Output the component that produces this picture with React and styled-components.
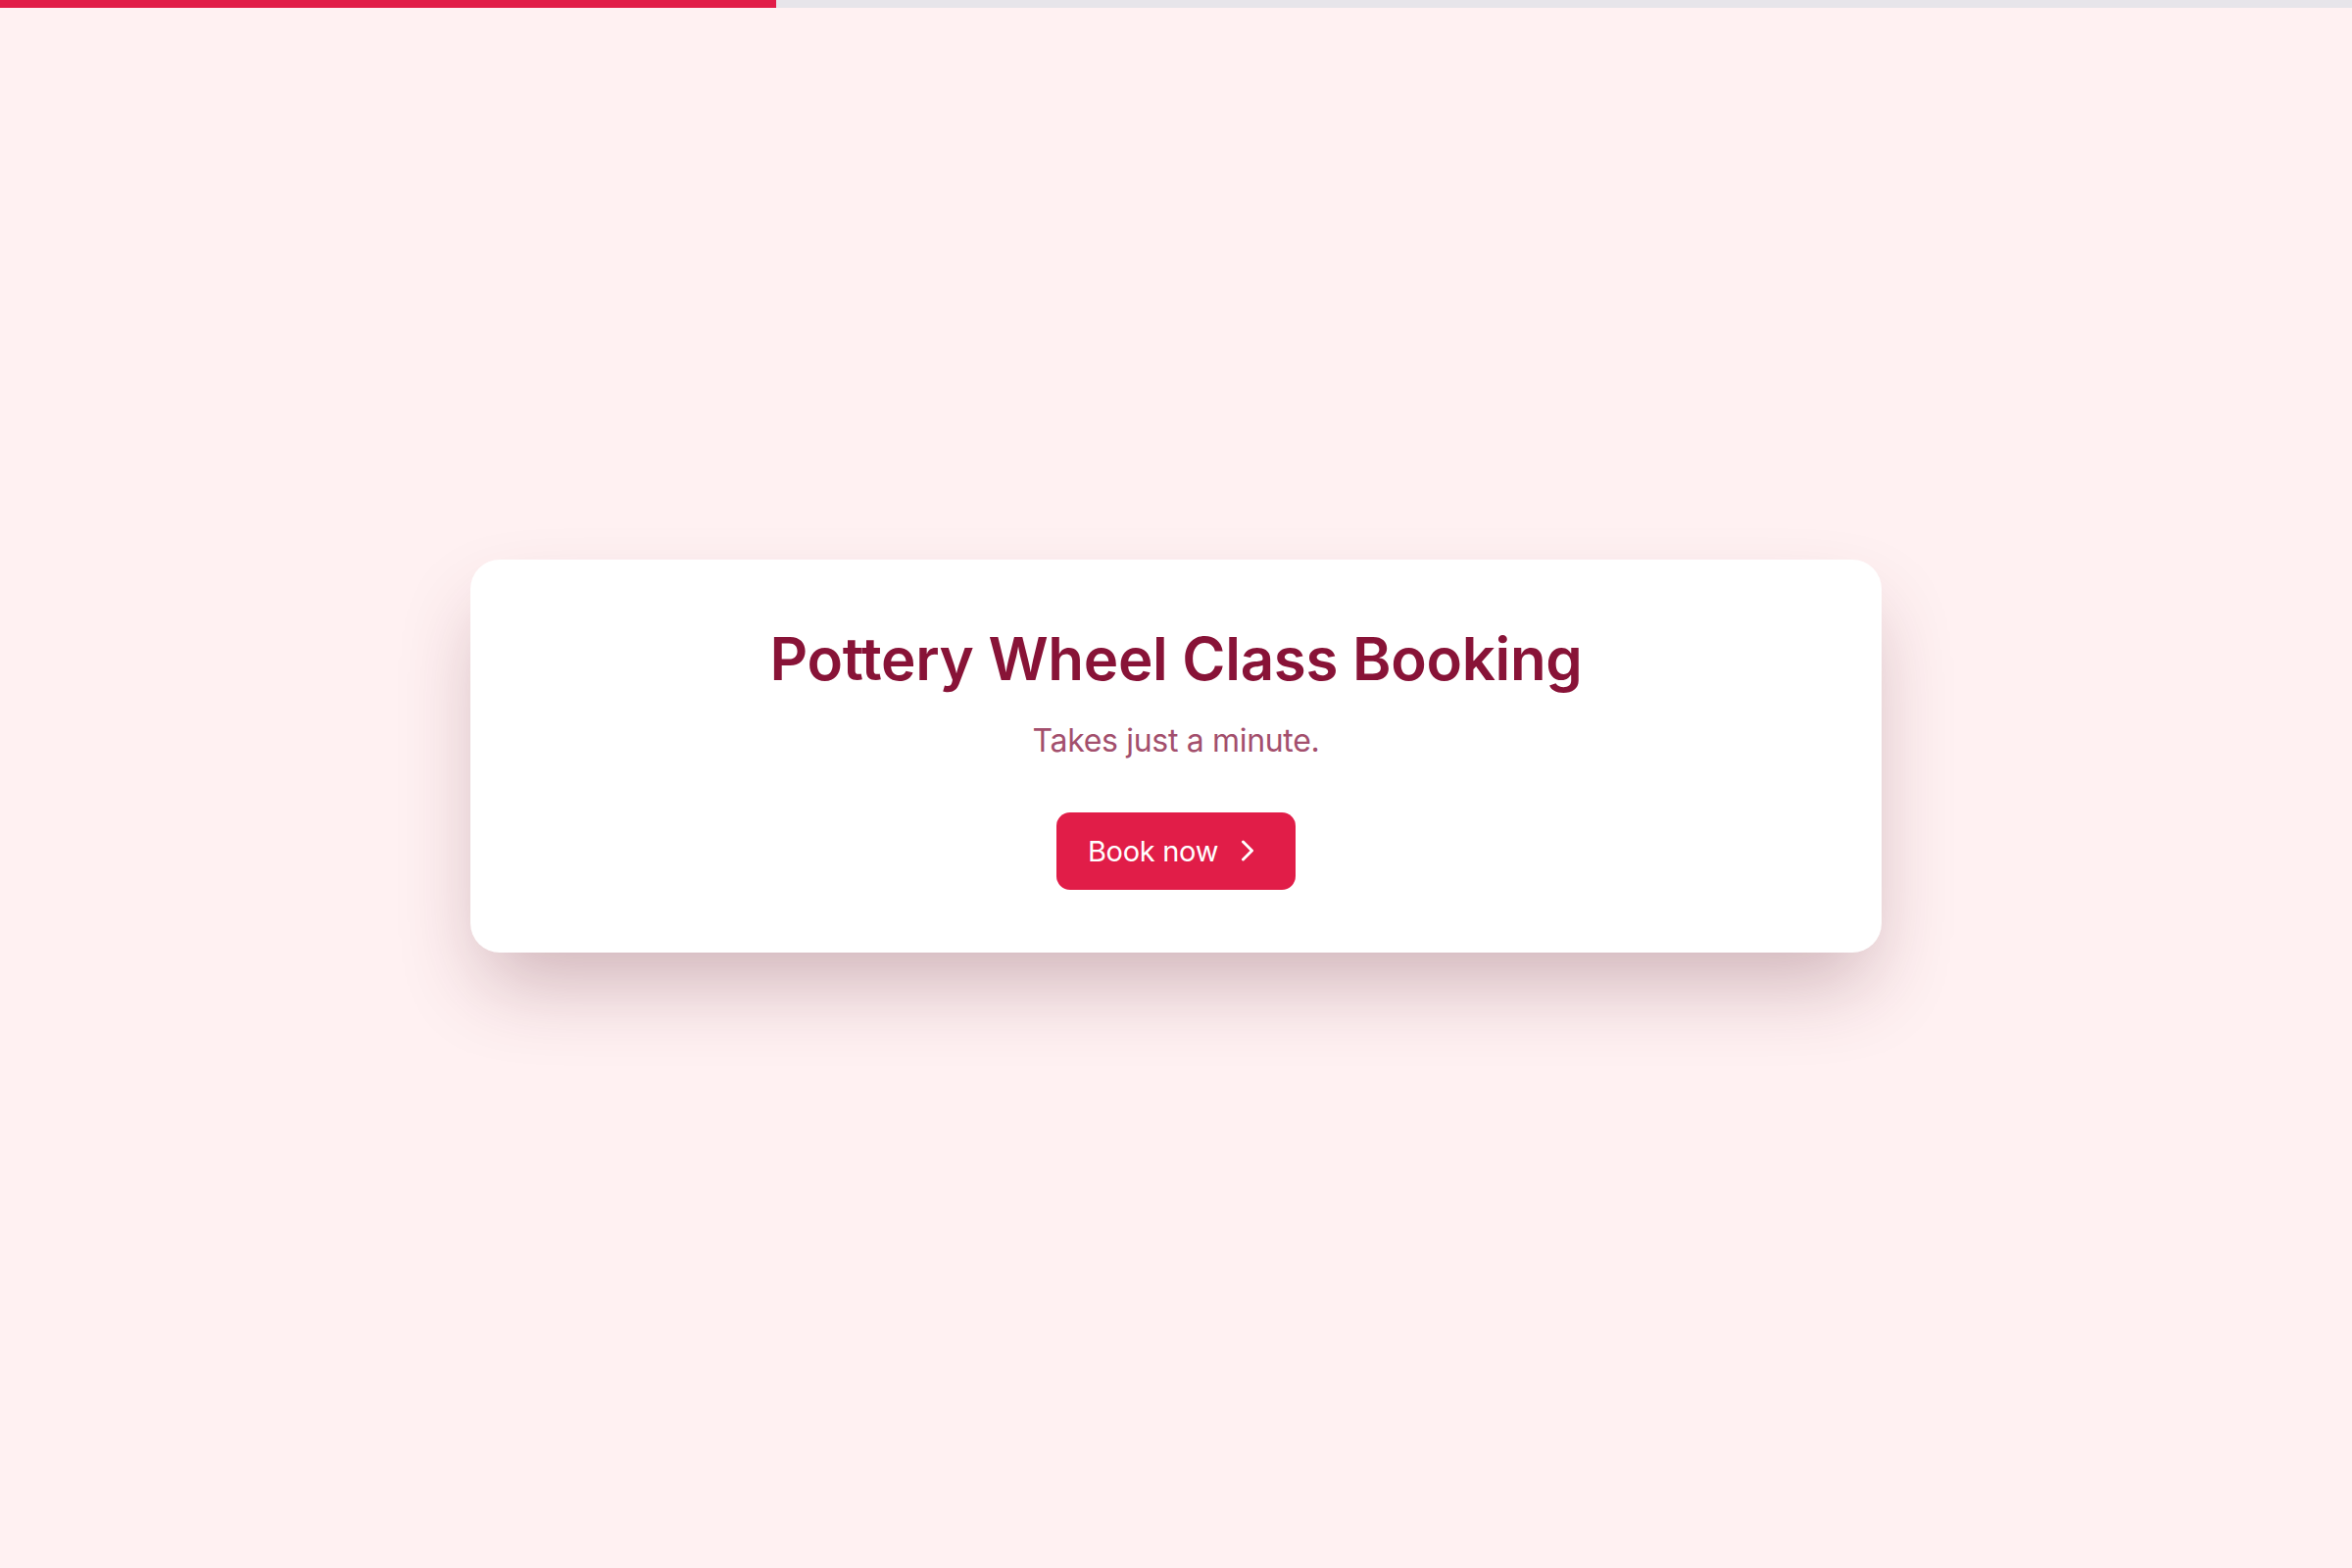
import React from 'react';
import styled, { createGlobalStyle } from 'styled-components';
import { ChevronRight } from 'lucide-react';

const GlobalStyle = createGlobalStyle`
    html, body {
        margin: 0;
        padding: 0;
        background: #fff1f2;
        font-family: 'Inter', 'Noto Sans', sans-serif;
    }
    * {
        box-sizing: border-box;
    }
`;

export default function App() {
    return (
        <>
            <GlobalStyle />
            <Page>
                <Progress>
                    <ProgressFill value={33} />
                </Progress>
                <Main>
                    <Card>
                        <Title>Pottery Wheel Class Booking</Title>
                        <Subtitle>Takes just a minute.</Subtitle>
                        <BookButton type="button">
                            Book now
                            <ChevronRight size={36} strokeWidth={2} />
                        </BookButton>
                    </Card>
                </Main>
            </Page>
        </>
    );
}

const Page = styled.div`
    min-height: 100vh;
    display: flex;
    flex-direction: column;
    background: #fff1f2;
`;

const Progress = styled.div`
    height: 8px;
    width: 100%;
    background: #e7e5ea;
`;

const ProgressFill = styled.div`
    height: 100%;
    width: ${p => p.value}%;
    background: #e11d48;
`;

const Main = styled.main`
    flex: 1;
    display: flex;
    align-items: center;
    justify-content: center;
    padding-bottom: 65px;
`;

const Card = styled.section`
    width: 1440px;
    background: #ffffff;
    border-radius: 30px;
    box-shadow: 0 42px 84px -14px rgba(90, 30, 45, 0.3);
    padding: 65px 48px 64px;
    display: flex;
    flex-direction: column;
    align-items: center;
`;

const Title = styled.h1`
    margin: 0;
    font-size: 60px;
    line-height: 1.2;
    font-weight: 600;
    letter-spacing: -0.005em;
    color: #881337;
`;

const Subtitle = styled.p`
    margin: 26px 0 0;
    font-size: 32px;
    line-height: 1.4;
    font-weight: 400;
    letter-spacing: -0.01em;
    color: #a34f6d;
`;

const BookButton = styled.button`
    margin-top: 50px;
    height: 79px;
    padding: 0 31px 0 32px;
    display: flex;
    align-items: center;
    gap: 12px;
    border: none;
    border-radius: 14px;
    background: #e11d48;
    color: #ffffff;
    font-family: 'Inter', 'Noto Sans', sans-serif;
    font-size: 29px;
    font-weight: 400;
    letter-spacing: -0.01em;
    cursor: pointer;
`;
